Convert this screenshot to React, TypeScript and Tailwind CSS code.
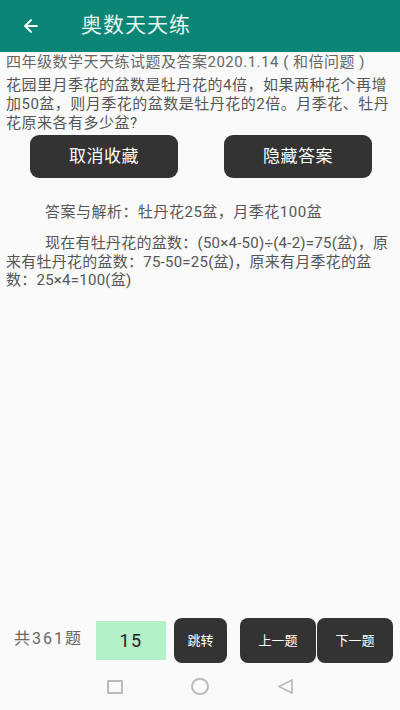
import { ArrowLeft } from "lucide-react"

const font = { fontFamily: 'Roboto, "Noto Sans CJK SC", "Noto Sans", sans-serif' }

export default function App() {
  return (
    <div className="flex h-[710px] w-[400px] flex-col bg-[#fafafa]" style={font}>
      {/* header */}
      <div className="flex h-[52px] shrink-0 items-center bg-[#0b8676] pl-[21px]">
        <ArrowLeft className="h-[20px] w-[20px] text-white" strokeWidth={2.4} />
        <div className="ml-[40px] text-[21px] tracking-[1px] text-[#e8f5f2]">奥数天天练</div>
      </div>

      {/* content */}
      <div className="flex flex-1 flex-col px-[6px]">
        <div className="whitespace-pre text-[15px] leading-[20px] tracking-[0.5px] text-[#666]">
          四年级数学天天练试题及答案2020.1.14{" ( 和倍问题 )"}
        </div>
        <div className="mt-[4px] text-[15px] leading-[19px] tracking-[0.5px] text-[#555]">
          花园里月季花的盆数是牡丹花的4倍，如果两种花个再增加50盆，则月季花的盆数是牡丹花的2倍。月季花、牡丹花原来各有多少盆?
        </div>

        <div className="mt-[2px] flex justify-between pl-[24px] pr-[22px]">
          <button className="h-[43px] w-[148px] rounded-[9px] bg-[#333] text-[17px] tracking-[0.5px] text-white">取消收藏</button>
          <button className="h-[43px] w-[148px] rounded-[9px] bg-[#333] text-[17px] tracking-[0.5px] text-white">隐藏答案</button>
        </div>

        <div className="mt-[24px] pl-[39px] text-[15px] leading-[20px] tracking-[0.5px] text-[#555]">
          答案与解析：牡丹花25盆，月季花100盆
        </div>
        <div className="mt-[12px] indent-[39px] text-[15px] leading-[18.5px] tracking-[0.25px] text-[#555]">
          现在有牡丹花的盆数：(50×4-50)÷(4-2)=75(盆)，原来有牡丹花的盆数：75-50=25(盆)，原来有月季花的盆数：25×4=100(盆)
        </div>

        <div className="flex-1" />

        {/* bottom bar */}
        <div className="flex items-center">
          <div className="ml-[8px] w-[82px] pb-[4px] text-[16px] tracking-[2px] text-[#666]">共361题</div>
          <div className="flex h-[39px] w-[70px] items-center justify-center bg-[#b4f1c9] text-[18px] tracking-[1.5px] text-[#222]">15</div>
          <button className="ml-[8px] h-[45px] w-[53px] rounded-[8px] bg-[#333] text-[13px] text-white">跳转</button>
          <button className="ml-[13px] h-[45px] w-[76px] rounded-[8px] bg-[#333] text-[13px] text-white">上一题</button>
          <button className="ml-[1px] h-[45px] w-[76px] rounded-[8px] bg-[#333] text-[13px] text-white">下一题</button>
        </div>
      </div>

      {/* nav bar */}
      <div className="flex h-[47px] shrink-0 items-center justify-center gap-[68px] bg-[#fafafa]">
        <div className="h-[14px] w-[16px] rounded-[1px] border-2 border-[#bbb]" />
        <div className="h-[17px] w-[18px] rounded-full border-2 border-[#bbb]" />
        <svg width="17" height="17" viewBox="0 0 17 17">
          <path d="M15 2 L2 8.5 L15 15 Z" fill="none" stroke="#bbb" strokeWidth="1.8" strokeLinejoin="round" />
        </svg>
      </div>
    </div>
  )
}
